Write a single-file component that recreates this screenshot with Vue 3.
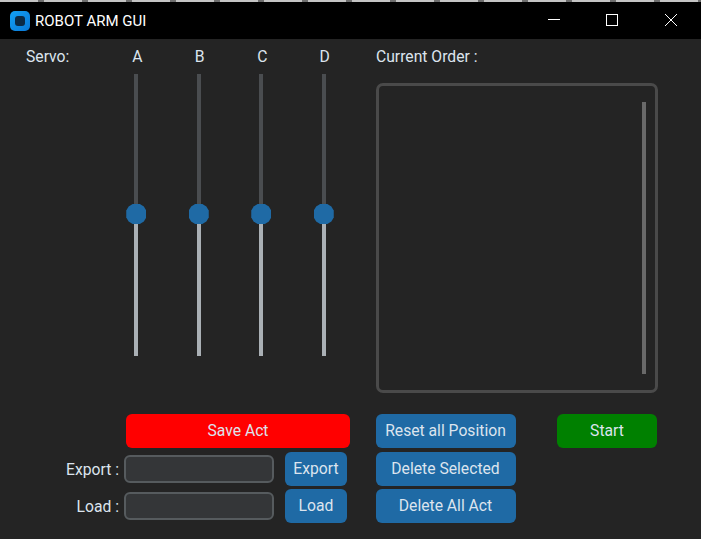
<template>
  <div class="window">
    <div class="noise"></div>
    <header class="titlebar">
      <div class="app-title">
        <span class="app-icon"></span>
        <span>ROBOT ARM GUI</span>
      </div>
      <div class="win-buttons">
        <svg width="12" height="12" viewBox="0 0 12 12"><path d="M0 5.5H12" stroke="#fff" stroke-width="1" fill="none" /></svg>
        <svg width="12" height="12" viewBox="0 0 12 12"><rect x="0.5" y="0.5" width="11" height="11" stroke="#fff" stroke-width="1" fill="none" /></svg>
        <svg class="close" width="12" height="12" viewBox="0 0 12 12"><path d="M0 0L12 12M12 0L0 12" stroke="#fff" stroke-width="1" fill="none" /></svg>
      </div>
    </header>

    <main class="content">
      <section class="top">
        <div class="servo-panel">
          <div class="servo-label">Servo:</div>
          <div class="servo" v-for="s in servos" :key="s">
            <div class="servo-name">{{ s }}</div>
            <div class="slider">
              <div class="track-top"></div>
              <div class="track-bottom"></div>
              <div class="thumb"></div>
            </div>
          </div>
        </div>
        <div class="order-panel">
          <div class="order-label">Current Order :</div>
          <div class="order-box">
            <div class="scrollbar"></div>
          </div>
        </div>
      </section>

      <section class="bottom">
        <div class="left-col">
          <button class="btn save">Save Act</button>
          <div class="file-row">
            <label class="export-label">Export :</label>
            <input type="text" class="entry" />
            <button class="btn small">Export</button>
          </div>
          <div class="file-row">
            <label class="load-label">Load :</label>
            <input type="text" class="entry" />
            <button class="btn small">Load</button>
          </div>
        </div>
        <div class="mid-col">
          <button class="btn wide">Reset all Position</button>
          <button class="btn wide">Delete Selected</button>
          <button class="btn wide">Delete All Act</button>
        </div>
        <div class="right-col">
          <button class="btn start">Start</button>
        </div>
      </section>
    </main>
  </div>
</template>

<script setup>
const servos = ["A", "B", "C", "D"];
</script>

<style>
html, body {
  margin: 0;
  background: #242424;
}
</style>

<style scoped>
.window {
  width: 701px;
  height: 539px;
  overflow: hidden;
  background: #242424;
  font-family: Roboto, "Liberation Sans", sans-serif;
  font-size: 15.7px;
  color: #dce4ee;
  display: flex;
  flex-direction: column;
}

.noise {
  height: 2px;
  background: repeating-linear-gradient(90deg, #c4c4c4 0, #c4c4c4 38px, #6e6e6e 38px, #6e6e6e 44px);
}

.titlebar {
  height: 37px;
  background: #000;
  display: flex;
  justify-content: space-between;
  align-items: flex-start;
  flex-shrink: 0;
}

.app-title {
  display: flex;
  align-items: center;
  height: 37px;
  padding-left: 10px;
  gap: 5px;
  font-size: 15px;
  color: #fff;
}

.app-icon {
  width: 20px;
  height: 20px;
  border-radius: 5px;
  background: linear-gradient(135deg, #12a0f5, #0a78d6);
  display: flex;
  align-items: center;
  justify-content: center;
}

.app-icon::before {
  content: "";
  width: 10px;
  height: 10px;
  border-radius: 3px;
  background: #0b2a45;
}

.win-buttons {
  display: flex;
  gap: 46px;
  padding: 12px 24px 0 0;
}

.win-buttons svg {
  display: block;
}

.close {
  margin-left: 1px;
}

.content {
  flex: 1;
  display: flex;
  flex-direction: column;
}

.top {
  display: flex;
  height: 375px;
}

.servo-panel {
  width: 376px;
  display: flex;
  padding-left: 26px;
  box-sizing: border-box;
}

.servo-label {
  width: 79px;
  line-height: 36px;
}

.servo {
  width: 62.5px;
  display: flex;
  flex-direction: column;
  align-items: center;
}

.servo-name {
  line-height: 36px;
  height: 35px;
  padding-left: 2px;
}

.slider {
  position: relative;
  width: 4px;
  height: 282px;
  display: flex;
  flex-direction: column;
}

.track-top {
  height: 140px;
  background: #4a4d50;
}

.track-bottom {
  flex: 1;
  background: #aab0b5;
}

.thumb {
  position: absolute;
  left: -8px;
  top: 130px;
  width: 20px;
  height: 20px;
  background: #1f6aa5;
  clip-path: polygon(32% 0, 68% 0, 88% 12%, 100% 32%, 100% 68%, 88% 88%, 68% 100%, 32% 100%, 12% 88%, 0 68%, 0 32%, 12% 12%);
}

.order-panel {
  width: 282px;
}

.order-label {
  line-height: 36px;
  height: 44px;
}

.order-box {
  position: relative;
  height: 310px;
  box-sizing: border-box;
  border: 3px solid #4a4a4a;
  border-radius: 7px;
}

.scrollbar {
  position: absolute;
  right: 9px;
  top: 16px;
  width: 4px;
  height: 272px;
  background: #696969;
}

.bottom {
  display: flex;
}

.left-col {
  width: 376px;
  display: flex;
  flex-direction: column;
  gap: 4px;
}

.left-col .file-row + .file-row {
  margin-top: -1px;
}

.btn {
  height: 34px;
  border: none;
  border-radius: 6px;
  padding: 0 0 2px;
  font-family: inherit;
  font-size: 15.7px;
  color: #dce4ee;
  background: #1f6aa5;
}

.save {
  width: 224px;
  margin-left: 126px;
  background: #ff0000;
}

.file-row {
  display: flex;
  align-items: center;
  height: 34px;
}

.file-row label {
  width: 120px;
  text-align: right;
}

.file-row .export-label {
  padding-right: 1px;
  width: 119px;
}

.file-row .load-label {
  padding-right: 1px;
  width: 119px;
}

.entry {
  width: 150px;
  height: 28px;
  box-sizing: border-box;
  margin-left: 4px;
  background: #343638;
  border: 2px solid #565b5e;
  border-radius: 6px;
  outline: none;
}

.small {
  width: 62px;
  margin-left: 11px;
}

.mid-col {
  width: 140px;
  display: flex;
  flex-direction: column;
  gap: 4px;
}

.mid-col .wide:last-child {
  margin-top: -1px;
}

.wide {
  width: 140px;
  padding-right: 1px;
}

.right-col {
  margin-left: 41px;
}

.start {
  width: 100px;
  background: #008000;
}
</style>
